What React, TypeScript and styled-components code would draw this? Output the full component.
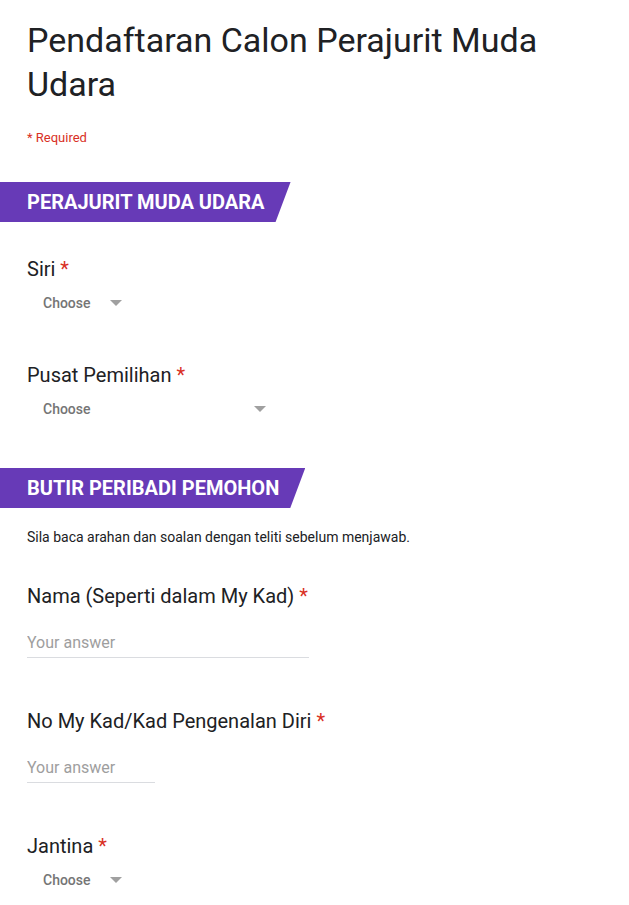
import React from 'react';
import styled, { createGlobalStyle } from 'styled-components';

const GlobalStyle = createGlobalStyle`
  html, body { margin: 0; padding: 0; background: #fff; }
  body { font-family: Roboto, "Liberation Sans", Arial, sans-serif; color: #202124; }
`;

const Page = styled.div`
  width: 629px;
  padding: 18px 0 20px;
  box-sizing: border-box;
`;

const Title = styled.h1`
  margin: 0;
  padding: 0 27px;
  font-weight: 400;
  font-size: 34px;
  line-height: 44px;
  color: #202124;
`;

const RequiredNote = styled.div`
  margin-top: 24px;
  padding: 0 27px;
  font-size: 13px;
  color: #d93025;
`;

const SectionBand = styled.div<{ gap: number }>`
  margin-top: ${({ gap }) => gap}px;
  display: inline-block;
  height: 40px;
  line-height: 40px;
  padding: 0 26px 0 27px;
  background: #673ab7;
  color: #fff;
  font-weight: 700;
  font-size: 20px;
  clip-path: polygon(0 0, 100% 0, calc(100% - 15px) 100%, 0 100%);
`;

const Description = styled.div`
  margin-top: 21px;
  padding: 0 27px;
  font-size: 14px;
  color: #202124;
`;

const Question = styled.div<{ gap: number }>`
  margin-top: ${({ gap }) => gap}px;
  padding: 0 27px;
`;

const Label = styled.div`
  font-size: 20px;
  line-height: 24px;
  color: #202124;
`;

const Star = styled.span`
  color: #d93025;
`;

const Dropdown = styled.div<{ width: number }>`
  margin-top: 11px;
  width: ${({ width }) => width}px;
  display: flex;
  align-items: center;
  justify-content: space-between;
  padding-left: 16px;
  box-sizing: border-box;
  height: 22px;
  font-size: 14px;
  font-weight: 500;
  color: #757575;
`;

const Caret = styled.span`
  width: 0;
  height: 0;
  border-left: 6px solid transparent;
  border-right: 6px solid transparent;
  border-top: 6px solid #a0a0a0;
`;

const AnswerInput = styled.input<{ width: number }>`
  display: block;
  margin-top: 25px;
  width: ${({ width }) => width}px;
  box-sizing: border-box;
  border: none;
  border-bottom: 1px solid #dadce0;
  padding: 0 0 5px;
  font-family: Roboto, "Liberation Sans", Arial, sans-serif;
  font-size: 16px;
  color: #202124;
  outline: none;
  &::placeholder { color: #9e9e9e; }
`;

const Choose: React.FC<{ width: number }> = ({ width }) => (
  <Dropdown width={width}>
    <span>Choose</span>
    <Caret />
  </Dropdown>
);

export default function App() {
  return (
    <Page>
      <GlobalStyle />
      <Title>Pendaftaran Calon Perajurit Muda Udara</Title>
      <RequiredNote>* Required</RequiredNote>

      <SectionBand gap={37}>PERAJURIT MUDA UDARA</SectionBand>

      <Question gap={35}>
        <Label>Siri <Star>*</Star></Label>
        <Choose width={95} />
      </Question>

      <Question gap={49}>
        <Label>Pusat Pemilihan <Star>*</Star></Label>
        <Choose width={239} />
      </Question>

      <SectionBand gap={48}>BUTIR PERIBADI PEMOHON</SectionBand>
      <Description>Sila baca arahan dan soalan dengan teliti sebelum menjawab.</Description>

      <Question gap={39}>
        <Label>Nama (Seperti dalam My Kad) <Star>*</Star></Label>
        <AnswerInput width={282} placeholder="Your answer" />
      </Question>

      <Question gap={51}>
        <Label>No My Kad/Kad Pengenalan Diri <Star>*</Star></Label>
        <AnswerInput width={128} placeholder="Your answer" />
      </Question>

      <Question gap={51}>
        <Label>Jantina <Star>*</Star></Label>
        <Choose width={95} />
      </Question>
    </Page>
  );
}
